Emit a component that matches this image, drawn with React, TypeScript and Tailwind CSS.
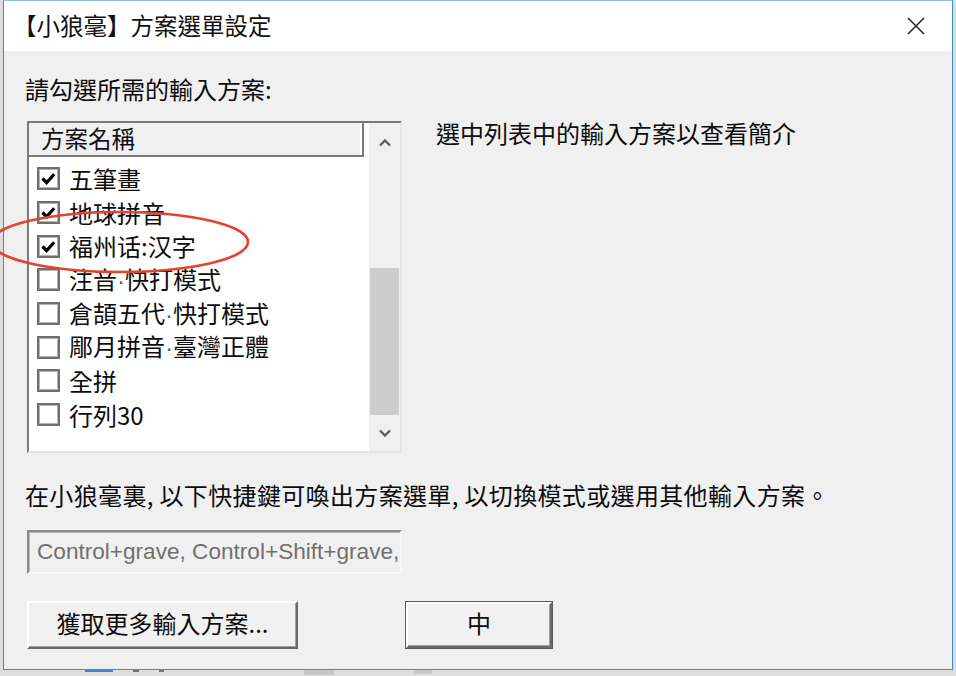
import React from 'react';

const cjk = "font-['Noto_Sans_CJK_TC','Noto_Sans_CJK_SC',sans-serif]";

type Scheme = { name: string; checked: boolean };

const schemes: Scheme[] = [
  { name: '五筆畫', checked: true },
  { name: '地球拼音', checked: true },
  { name: '福州话:汉字', checked: true },
  { name: '注音·快打模式', checked: false },
  { name: '倉頡五代·快打模式', checked: false },
  { name: '郮月拼音·臺灣正體', checked: false },
  { name: '全拼', checked: false },
  { name: '行列30', checked: false },
];

// narrow middle dot, as the dialog's bitmap font draws it
function SchemeName({ name }: { name: string }) {
  const parts = name.split('·');
  return (
    <span className="text-[24px] leading-none text-[#0c0c0c] whitespace-nowrap">
      {parts.map((p, i) => (
        <React.Fragment key={i}>
          {i > 0 && <span className="font-['Liberation_Sans',sans-serif] text-[#3a6ea8]">·</span>}
          {p}
        </React.Fragment>
      ))}
    </span>
  );
}

function CheckBox({ checked }: { checked: boolean }) {
  return (
    <div className="w-[23px] h-[23px] shrink-0 border-2 border-[#6f6f6f] bg-white shadow-[inset_0_0_0_1px_#b4b4b4] flex items-center justify-center">
      {checked && (
        <svg width="17" height="17" viewBox="0 0 17 17">
          <path d="M2.5 8.5 L6.6 12.6 L14.2 4.2" fill="none" stroke="#000" strokeWidth="3.2" />
        </svg>
      )}
    </div>
  );
}

function Chevron({ up }: { up?: boolean }) {
  return (
    <svg width="14" height="9" viewBox="0 0 14 9">
      <path
        d={up ? 'M2 7.5 L7 2.5 L12 7.5' : 'M2 1.5 L7 6.5 L12 1.5'}
        fill="none"
        stroke="#5f5f5f"
        strokeWidth="2.4"
      />
    </svg>
  );
}

function SchemeList() {
  return (
    <div className="w-[375px] h-[332px] shrink-0 border-2 border-t-[#7a7a7a] border-l-[#7a7a7a] border-r-[#e4e4e4] border-b-[#e4e4e4] flex bg-white">
      <div className="flex-1 flex flex-col">
        <div className="h-[34px] flex bg-white">
          <div className="w-[335px] h-full bg-[#f0f0f0] border-b-2 border-r-2 border-[#7a7a7a] shadow-[inset_-2px_0_0_#ffffff] pl-[12px] flex items-center text-[23.5px] leading-none text-[#111]">
            方案名稱
          </div>
        </div>
        <div className="pt-[5px] flex flex-col">
          {schemes.map((s) => (
            <div key={s.name} className="h-[33.7px] flex items-center pl-[8px] gap-[9px]">
              <CheckBox checked={s.checked} />
              <SchemeName name={s.name} />
            </div>
          ))}
        </div>
      </div>
      <div className="w-[31px] bg-[#f0f0f0] flex flex-col">
        <div className="h-[38px] flex items-center justify-center">
          <Chevron up />
        </div>
        <div className="h-[254px] flex flex-col px-[1px]">
          <div className="h-[107px]" />
          <div className="h-[147px] bg-[#cdcdcd]" />
        </div>
        <div className="flex-1 flex items-center justify-center">
          <Chevron />
        </div>
      </div>
    </div>
  );
}

function RaisedButton({ label, width, isDefault }: { label: string; width: string; isDefault?: boolean }) {
  return (
    <div className={`${width} h-[48px] shrink-0 ${isDefault ? 'border border-[#5a5a5a]' : ''}`}>
      <div className="w-full h-full border-2 border-t-white border-l-white border-r-[#6a6a6a] border-b-[#6a6a6a] shadow-[inset_-1px_-1px_0_#a0a0a0] bg-[#f1f1f1] flex items-center justify-center pb-[4px] text-[24px] leading-none text-[#0c0c0c]">
        {label}
      </div>
    </div>
  );
}

export default function App() {
  return (
    <div className={`w-[956px] h-[676px] bg-[#dedede] relative overflow-hidden ${cjk}`}>
      <div className="ml-[3px] w-[950px] h-[670px] border border-[#3f88d4] border-t-[#8fbbe6] bg-[#f0f0f0] flex flex-col">
        <div className="h-[50px] shrink-0 bg-white flex items-center justify-between pl-[9px] pr-[26px]">
          <span className="text-[23.5px] leading-none text-[#111]">【小狼毫】方案選單設定</span>
          <svg width="20" height="20" viewBox="0 0 20 20">
            <path d="M2 2 L18 18 M18 2 L2 18" stroke="#2a2a2a" strokeWidth="1.6" />
          </svg>
        </div>

        <div className="flex-1 flex flex-col pl-[21px]">
          <div className="mt-[23px] h-[30px] flex items-center text-[24px] leading-none text-[#0c0c0c]">
            請勾選所需的輸入方案:
          </div>

          <div className="mt-[17px] ml-[2px] flex items-start">
            <SchemeList />
            <div className="ml-[34px] mt-[-1px] h-[26px] flex items-center text-[24px] leading-none text-[#0c0c0c] whitespace-nowrap">
              選中列表中的輸入方案以查看簡介
            </div>
          </div>

          <div className="mt-[27px] h-[30px] flex items-center text-[24px] leading-none tracking-[0.35px] text-[#0c0c0c] whitespace-nowrap">
            在小狼毫裏, 以下快捷鍵可喚出方案選單, 以切換模式或選用其他輸入方案。
          </div>

          <div className="mt-[20px] ml-[2px] w-[375px] h-[44px] border-2 border-t-[#8a8a8a] border-l-[#8a8a8a] border-r-[#f8f8f8] border-b-[#f8f8f8] shadow-[inset_1px_1px_0_#b8b8b8] bg-[#f0f0f0] overflow-hidden flex items-center pl-[8px]">
            <span className="font-['Liberation_Sans',Arial,sans-serif] text-[22.6px] leading-none text-[#707070] whitespace-nowrap">
              Control+grave, Control+Shift+grave,
            </span>
          </div>

          <div className="mt-[27px] ml-[2px] flex">
            <RaisedButton label="獲取更多輸入方案..." width="w-[271px]" />
            <div className="ml-[107px]">
              <RaisedButton label="中" width="w-[148px]" isDefault />
            </div>
          </div>
        </div>
      </div>

      <div className="h-[6px] flex items-start pl-[85px] gap-[20px]">
        <div className="w-[28px] h-[2px] bg-[#3f88d4]" />
        <div className="w-[6px] h-[2px] bg-[#777]" />
        <div className="w-[5px] h-[2px] bg-[#777]" />
        <div className="ml-[120px] w-[30px] h-[5px] bg-[#c8c8c8]" />
        <div className="ml-[60px] w-[18px] h-[4px] bg-[#c8c8c8]" />
      </div>

      <svg className="absolute inset-0 pointer-events-none" width="956" height="676">
        <ellipse cx="120" cy="242" rx="128" ry="30" fill="none" stroke="#e2452f" strokeWidth="2.6" />
      </svg>
    </div>
  );
}
